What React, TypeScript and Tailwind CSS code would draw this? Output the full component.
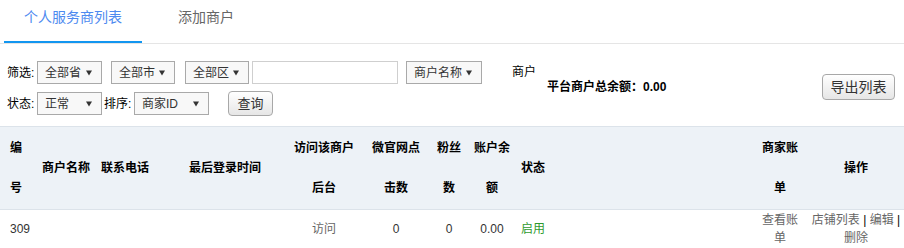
import { ReactNode } from "react";

const font = { fontFamily: '"Liberation Sans", "Noto Sans CJK SC", sans-serif' };

function Select({ label, w }: { label: string; w: string }) {
  return (
    <div
      className={`${w} h-[23px] border border-[#a9a9a9] bg-[#f8f8f8] flex items-center justify-between pl-[7px] pr-[9px] text-[12px] text-[#333]`}
    >
      <span>{label}</span>
      <svg width="6" height="6" viewBox="0 0 6 6">
        <path d="M0 0.5 H6 L3 5.5 Z" fill="#333" />
      </svg>
    </div>
  );
}

function Th({ children, className = "" }: { children: ReactNode; className?: string }) {
  return (
    <th className={`font-bold text-black text-[12px] leading-[40px] py-[1px] align-middle whitespace-nowrap ${className}`}>
      {children}
    </th>
  );
}

function Td({ children, className = "" }: { children?: ReactNode; className?: string }) {
  return (
    <td className={`text-[12px] leading-[18px] py-[1px] align-middle whitespace-nowrap ${className}`}>
      {children}
    </td>
  );
}

export default function App() {
  return (
    <div className="w-[904px] h-[248px] overflow-hidden bg-white text-[#333]" style={font}>
      {/* tabs */}
      <div className="flex h-[44px] border-b border-[#e5e5e5] pl-[4px]">
        <div className="h-[43px] w-[138px] border-b-2 border-[#1296f0] text-center pt-[7px] text-[14px] leading-[20px] text-[#4d8af0]">
          个人服务商列表
        </div>
        <div className="h-[43px] ml-[16px] px-5 pt-[7px] text-[14px] leading-[20px] text-[#666]">
          添加商户
        </div>
      </div>

      {/* filters */}
      <div className="flex items-start pt-[17px]">
        <div className="flex flex-col gap-[7px] text-[12px] text-black">
          <div className="flex items-center">
            <span className="w-[37px] pl-[7px]">筛选:</span>
            <Select label="全部省" w="w-[65px]" />
            <div className="ml-[9px]">
              <Select label="全部市" w="w-[64px]" />
            </div>
            <div className="ml-[10px]">
              <Select label="全部区" w="w-[64px]" />
            </div>
            <input className="ml-[3px] w-[146px] h-[23px] border border-[#cfcfcf] outline-none" />
            <div className="ml-[8px]">
              <Select label="商户名称" w="w-[76px]" />
            </div>
          </div>
          <div className="flex items-center">
            <span className="w-[37px] pl-[7px]">状态:</span>
            <Select label="正常" w="w-[65px]" />
            <span className="ml-[2px] w-[30px]">排序:</span>
            <Select label="商家ID" w="w-[75px]" />
            <button className="ml-[19px] w-[45px] h-[25px] rounded-[4px] border border-[#a8a8a8] bg-gradient-to-b from-white to-[#e6e6e6] text-[13px] text-[#333]">
              查询
            </button>
          </div>
        </div>
        <span className="ml-[30px] mt-[3px] text-[12px] leading-[16px] text-black">商户</span>
        <span className="ml-[11px] mt-[18px] text-[12px] leading-[16px] font-bold text-black">
          平台商户总余额：0.00
        </span>
        <button className="ml-auto mr-[9px] mt-[13px] w-[73px] h-[26px] rounded-[4px] border border-[#a8a8a8] bg-gradient-to-b from-white to-[#e6e6e6] text-[14px] text-[#333]">
          导出列表
        </button>
      </div>

      {/* table */}
      <table className="mt-[10px] w-[904px] table-fixed border-collapse">
        <colgroup>
          <col className="w-[32px]" />
          <col className="w-[60px]" />
          <col className="w-[88px]" />
          <col className="w-[104px]" />
          <col className="w-[80px]" />
          <col className="w-[64px]" />
          <col className="w-[42px]" />
          <col className="w-[44px]" />
          <col className="w-[238px]" />
          <col className="w-[56px]" />
          <col className="w-[96px]" />
        </colgroup>
        <thead>
          <tr className="bg-[#edf2f7] border-t border-b border-[#dce3ea]">
            <Th className="text-left pl-[10px]">
              编<br />号
            </Th>
            <Th className="text-left pl-[10px]">商户名称</Th>
            <Th className="text-left pl-[9px]">联系电话</Th>
            <Th className="text-left pl-[9px]">最后登录时间</Th>
            <Th className="text-center">
              访问该商户<br />后台
            </Th>
            <Th className="text-center">
              微官网点<br />击数
            </Th>
            <Th className="text-center">
              粉丝<br />数
            </Th>
            <Th className="text-center">
              账户余<br />额
            </Th>
            <Th className="text-left pl-[7px]">状态</Th>
            <Th className="text-center">
              商家账<br />单
            </Th>
            <Th className="text-center">操作</Th>
          </tr>
        </thead>
        <tbody>
          <tr>
            <Td className="pl-[10px] text-[#333]">309</Td>
            <Td />
            <Td />
            <Td />
            <Td className="text-center text-[#666]">访问</Td>
            <Td className="text-center">0</Td>
            <Td className="text-center">0</Td>
            <Td className="text-center">0.00</Td>
            <Td className="pl-[7px] text-[#2e9a2e]">启用</Td>
            <Td className="text-center text-[#666]">
              查看账<br />单
            </Td>
            <Td className="text-center text-[#666]">
              店铺列表 <span className="text-black">|</span> 编辑 <span className="text-black">|</span>
              <br />
              删除
            </Td>
          </tr>
        </tbody>
      </table>
    </div>
  );
}
